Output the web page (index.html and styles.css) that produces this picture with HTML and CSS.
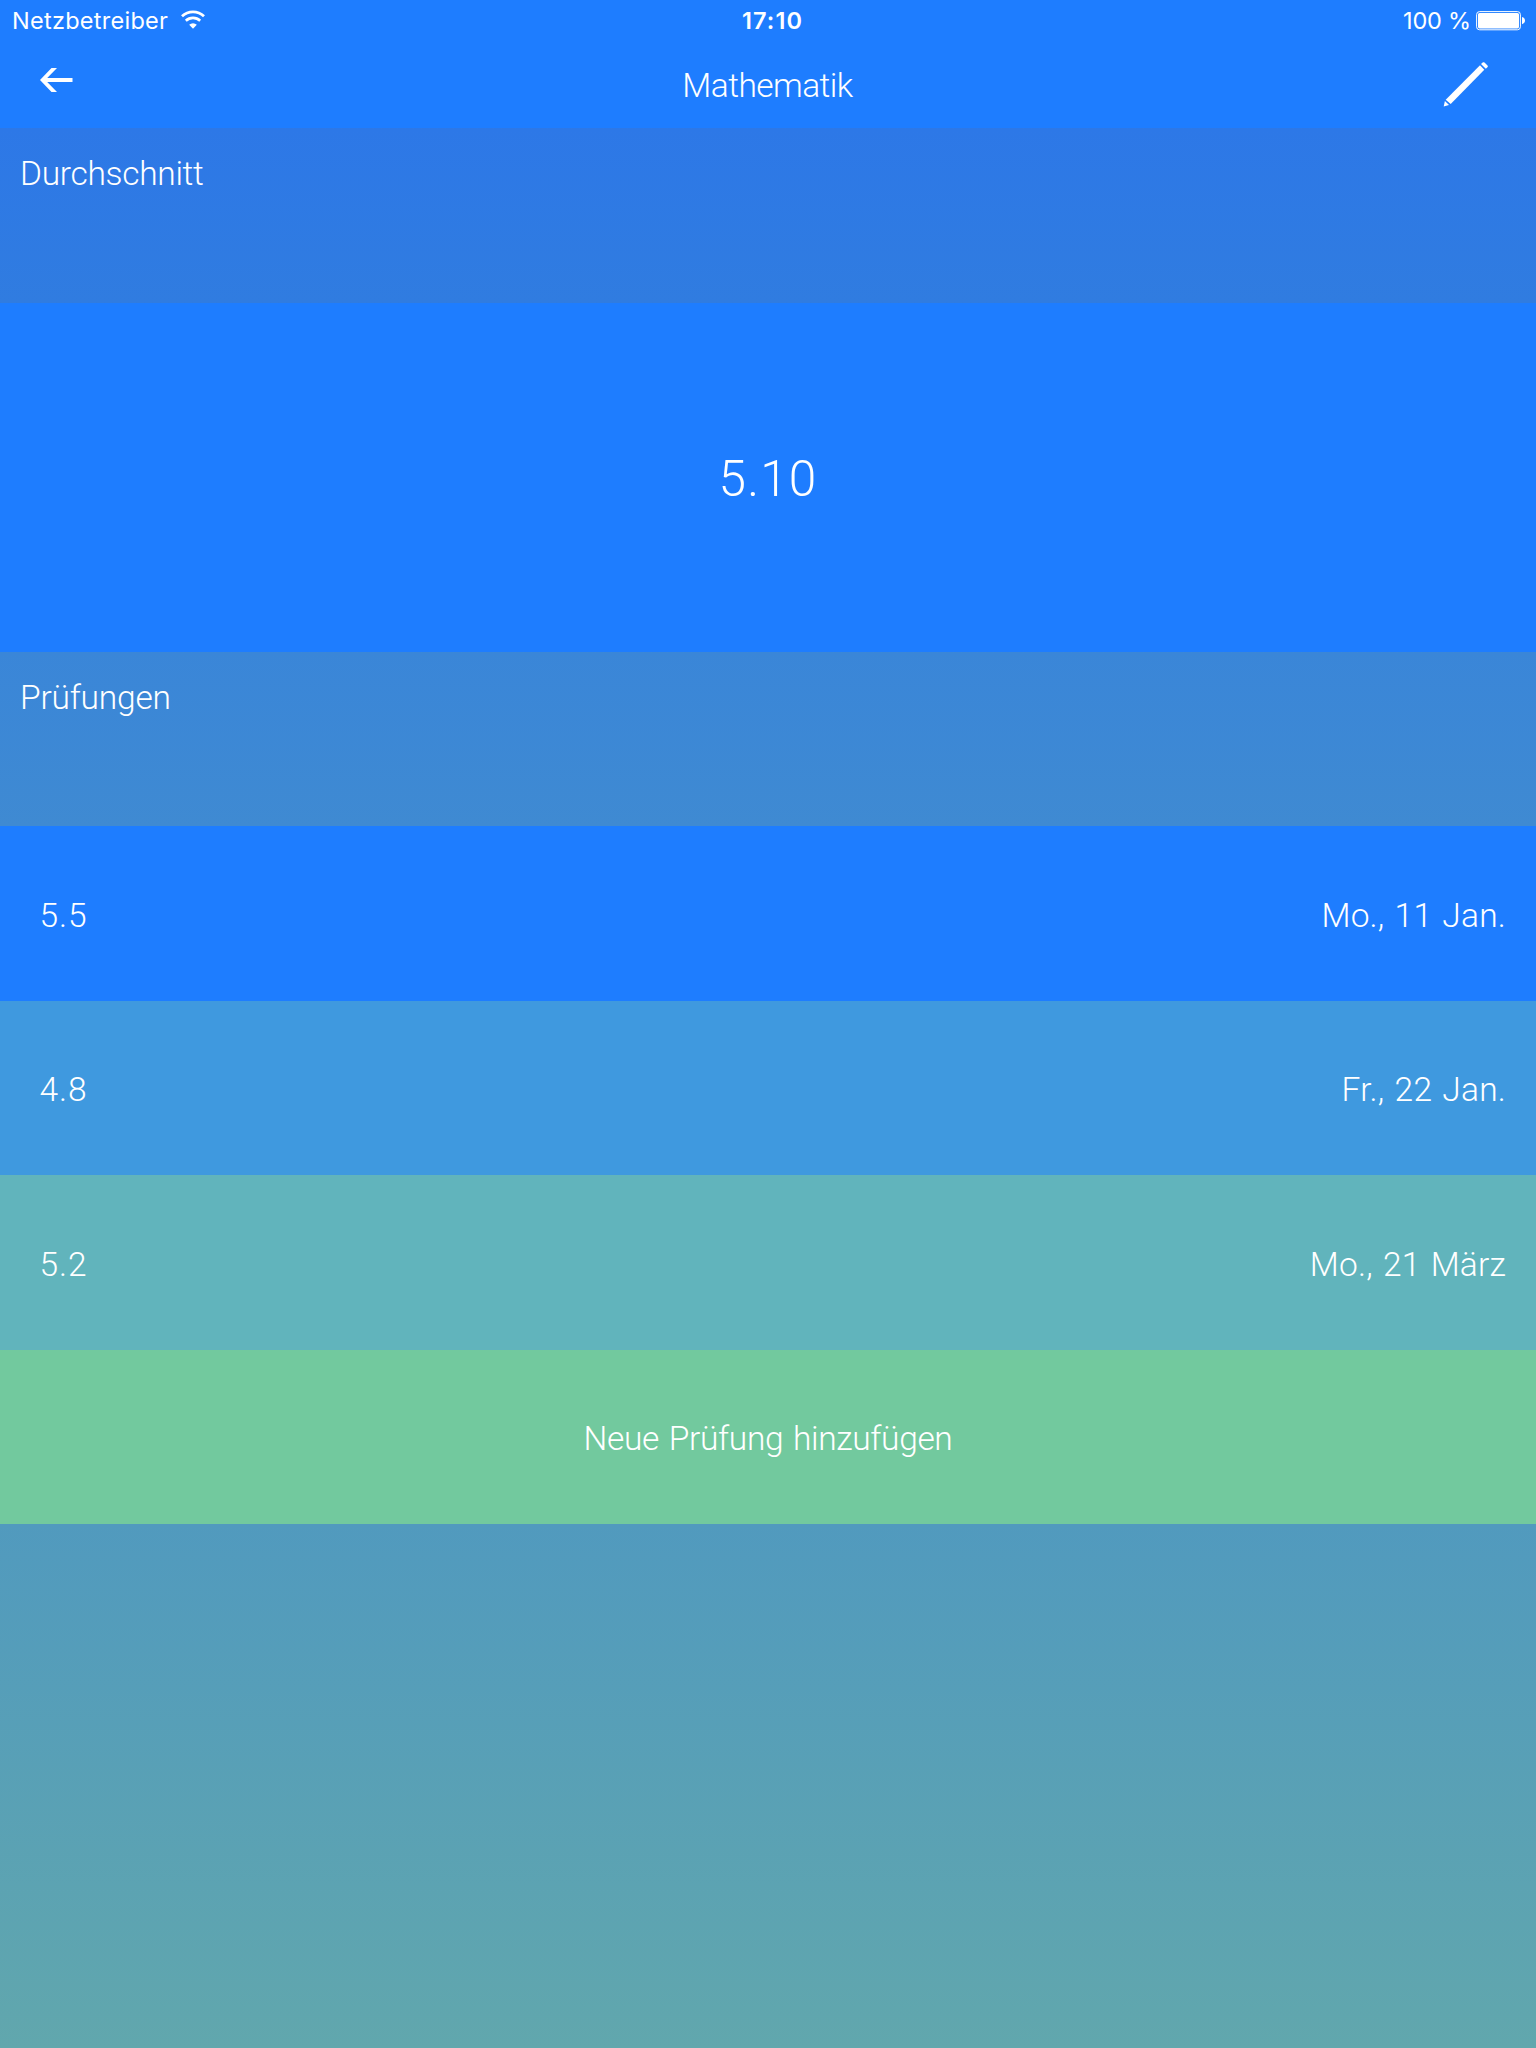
FILE: index.html
```html
<!DOCTYPE html>
<html lang="de">
<head>
<meta charset="utf-8">
<title>Mathematik</title>
<link rel="stylesheet" href="styles.css">
</head>
<body>
<header class="topbar">
  <div class="status">
    <div class="status-left">
      <span class="carrier">Netzbetreiber</span>
      <svg class="wifi" width="26" height="20" viewBox="0 0 26 20" fill="none" stroke="#fff">
        <path d="M2 6.200a16 16 0 0 1 22 0" stroke-width="2.800"/>
        <path d="M5.800 10.700a10.500 10.500 0 0 1 14.400 0" stroke-width="2.600"/>
        <path d="M13 18.800 9.200 14.700a5.500 5.500 0 0 1 7.600 0z" fill="#fff" stroke="none"/>
      </svg>
    </div>
    <span class="time">17:10</span>
    <div class="status-right">
      <span class="percent">100 %</span>
      <svg class="battery" width="50" height="20" viewBox="0 0 50 20">
        <rect x=".6" y=".6" width="43.8" height="18.2" rx="3" fill="none" stroke="#fff" stroke-width="1"/>
        <rect x="2" y="2" width="41" height="15.4" rx="1.6" fill="#fff"/>
        <path d="M46 6c2 .5 3 1.900 3 3.600s-1 3.100-3 3.600z" fill="#fff"/>
      </svg>
    </div>
  </div>
  <nav class="nav">
    <svg class="back" width="34" height="26" viewBox="0 0 34 26" fill="#fff">
      <path d="M0 13 11.500 1h5.500L7.200 11H32.500v4H7.200l9.800 10h-5.500z"/>
    </svg>
    <h1 class="title">Mathematik</h1>
    <svg class="edit" width="46" height="46" viewBox="0 0 46 46" fill="#fff">
      <path d="m36 4.300 4.300 4.400L6.700 43 1.700 38.700z"/>
      <path d="m37 2.900 2-1.600q.8-.4 1.500.2l3 2.900q.7.800.2 1.500l-1.900 1.900z"/>
      <path d="M.9 39.900 5 44.100-.3 45.500z"/>
    </svg>
  </nav>
</header>
<main class="content">
  <h2 class="heading">Durchschnitt</h2>
  <div class="average">5.10</div>
  <h2 class="heading exams">Prüfungen</h2>
  <ul class="list">
    <li class="row first"><span class="grade">5.5</span><span class="date">Mo., 11 Jan.</span></li>
    <li class="row second"><span class="grade">4.8</span><span class="date">Fr., 22 Jan.</span></li>
    <li class="row third"><span class="grade">5.2</span><span class="date">Mo., 21 März</span></li>
    <li class="row add">Neue Prüfung hinzufügen</li>
  </ul>
</main>
</body>
</html>
```
FILE: styles.css
```css
* { box-sizing: border-box; }

body {
  margin: 0;
  min-height: 2048px;
  background: linear-gradient(#2b76ea 0, #2d78e7 128px, #307ce0 303px, #3a86d8 652px, #3f8ad2 826px, #519abe 1524px, #61a7ad 2048px);
  color: #fff;
  font: 300 33.5px/40px Roboto, "Liberation Sans", sans-serif;
}

h1, h2, ul { margin: 0; padding: 0; font: inherit; list-style: none; }
svg { display: block; overflow: visible; }

.topbar { height: 128px; background: #1e7dff; }

.status {
  display: grid;
  grid-template-columns: 1fr auto 1fr;
  height: 40px;
  font: 400 23.5px/42px Inter, sans-serif;
}
.status-left, .status-right { display: flex; }
.status-left { padding-left: 12px; }
.carrier { letter-spacing: .27px; }
.wifi { margin: 10px 0 0 12px; }
.time { padding-left: 9px; font-weight: 600; letter-spacing: 1.1px; }
.status-right { justify-content: flex-end; padding-right: 10px; }
.percent { letter-spacing: -.2px; }
.battery { margin: 11px 0 0 5px; }

.nav {
  display: grid;
  grid-template-columns: 1fr auto 1fr;
  align-items: start;
  height: 88px;
  padding: 21px 46px 0 40px;
}
.back { margin-top: 6px; }
.title { padding: 5px 0 0 5px; letter-spacing: -.55px; }
.edit { justify-self: end; }

.heading { height: 175px; padding: 26px 20px 0 20px; letter-spacing: -.3px; }
.exams { height: 174px; letter-spacing: -.2px; }

.average {
  display: flex;
  align-items: center;
  justify-content: center;
  height: 349px;
  padding: 3px 0 0;
  background: #1e7dff;
  font-size: 49.5px;
  letter-spacing: 1.2px;
}

.row {
  display: flex;
  align-items: center;
  justify-content: space-between;
  height: 174px;
  padding: 4px 30px 0 39.5px;
}
.grade { letter-spacing: .9px; }
.date { letter-spacing: .2px; word-spacing: 1.8px; }
.first, .third { height: 175px; padding-top: 5px; }
.first { background: #1e7dff; }
.second { background: #3f99df; }
.third { background: #61b4bc; }
.add { justify-content: center; padding: 3px 0 0; background: #72c99e; letter-spacing: -.35px; word-spacing: 2px; }
```
